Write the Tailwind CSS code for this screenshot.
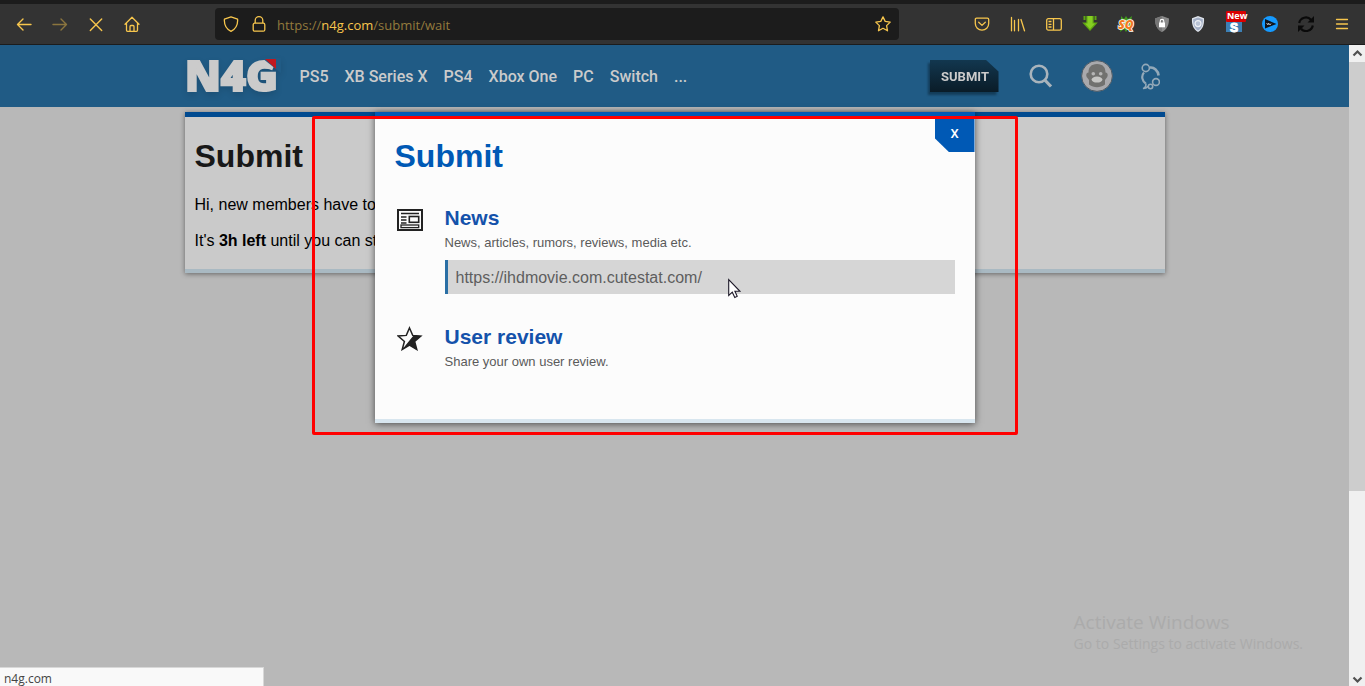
<!DOCTYPE html>
<html lang="en">
<head>
    <meta charset="UTF-8">
    <meta name="viewport" content="width=device-width, initial-scale=1.0">
    <title>N4G - Submit</title>
    <script src="https://cdn.jsdelivr.net/npm/@tailwindcss/browser@4"></script>
</head>
<body class="flex h-screen flex-col overflow-hidden bg-[#b8b8b8] font-['Liberation_Sans',sans-serif]">

    <!-- Browser toolbar -->
    <div class="flex h-[45px] shrink-0 items-center border-t-4 border-b border-[#1c1c1c] bg-[#333333] pr-[5px] pl-[6px] text-[#f7c64d]">
        <button class="flex w-9 justify-center" aria-label="Back">
            <svg class="size-4" viewBox="0 0 16 16" fill="none" stroke="currentColor" stroke-width="1.4" stroke-linecap="round" stroke-linejoin="round"><path d="M15 8.5H1.5M7 3L1.5 8.5L7 14"/></svg>
        </button>
        <button class="flex w-9 justify-center opacity-45" aria-label="Forward">
            <svg class="size-4" viewBox="0 0 16 16" fill="none" stroke="currentColor" stroke-width="1.4" stroke-linecap="round" stroke-linejoin="round"><path d="M1 8.5H14.5M9 3L14.5 8.5L9 14"/></svg>
        </button>
        <button class="flex w-9 justify-center" aria-label="Stop">
            <svg class="size-4" viewBox="0 0 16 16" fill="none" stroke="currentColor" stroke-width="1.4" stroke-linecap="round"><path d="M2.3 3L13.7 14.5M13.7 3L2.3 14.5"/></svg>
        </button>
        <button class="flex w-9 justify-center" aria-label="Home">
            <svg class="size-4" viewBox="0 0 16 16" fill="none" stroke="currentColor" stroke-width="1.3" stroke-linecap="round" stroke-linejoin="round"><path d="M1 8.3L8 1.3L15 8.3M2.5 7.2V14.3Q2.5 15.3 3.5 15.3H12.5Q13.5 15.3 13.5 14.3V7.2M6 15V10.5Q6 9.5 7 9.5H9Q10 9.5 10 10.5V15"/></svg>
        </button>

        <div class="mx-[65px] flex h-8 min-w-0 flex-1 items-center rounded-sm bg-[#1c1c1c] px-2">
            <svg class="size-4 shrink-0" viewBox="0 0 16 16" fill="none" stroke="currentColor" stroke-width="1.3" stroke-linejoin="round"><path d="M8 .8L14.6 3.2C15 9 12.5 13 8 15.3C3.5 13 1 9 1.4 3.2Z"/></svg>
            <svg class="ml-3 size-4 shrink-0" viewBox="0 0 16 16" fill="none" stroke="currentColor" stroke-width="1.3"><rect x="2.2" y="7.2" width="11.6" height="8" rx="1.5"/><path d="M4.2 7V4.5a3.8 3.8 0 0 1 7.6 0V7"/></svg>
            <div class="ml-[10px] flex-1 truncate pt-0.5 font-['Open_Sans',sans-serif] text-[13px] leading-5 text-[#937a3c]">https://<span class="text-[#f7c64d]">n4g.com</span>/submit/wait</div>
            <button aria-label="Bookmark this page">
                <svg class="size-4" viewBox="0 0 16 16" fill="none" stroke="currentColor" stroke-width="1.3" stroke-linejoin="round"><path d="M8 .9L10.2 5.4L15.2 6.1L11.6 9.6L12.5 14.8L8 12.3L3.5 14.8L4.4 9.6L.8 6.1L5.8 5.4Z"/></svg>
            </button>
        </div>

        <button class="flex w-9 justify-center" aria-label="Pocket">
            <svg class="size-4" viewBox="0 0 16 16" fill="none" stroke="currentColor" stroke-width="1.3" stroke-linecap="round" stroke-linejoin="round"><path d="M2.6 2.2H13.4Q14.7 2.2 14.7 3.5V7.5A6.7 6.7 0 0 1 1.3 7.5V3.5Q1.3 2.2 2.6 2.2ZM4.7 6.3L8 9.4L11.3 6.3"/></svg>
        </button>
        <button class="flex w-9 justify-center" aria-label="Library">
            <svg class="size-4" viewBox="0 0 16 16" fill="none" stroke="currentColor" stroke-width="1.3" stroke-linecap="round"><path d="M1.5 1.5V14.8M4.5 4.5V14.8M8.5 3.5V14.8M11 3.5L14.5 14.8"/></svg>
        </button>
        <button class="flex w-9 justify-center" aria-label="Sidebars">
            <svg class="size-4" viewBox="0 0 16 16" fill="none" stroke="currentColor" stroke-width="1.3"><rect x=".7" y="2.7" width="14.6" height="11.4" rx="1.6"/><path d="M7.5 3V14M2.5 5.5H5.5M2.5 8.3H5.5M2.5 11H5.5"/></svg>
        </button>
        <button class="flex w-9 justify-center" aria-label="Downloader">
            <svg class="size-4" viewBox="0 0 16 16"><path d="M1.5 0H3.5V4H1.5ZM12.5 0H14.5V4H12.5ZM4.3 0H11.7V6.5H15.8L8 15L.2 6.5H4.3Z" fill="#5fa613"/><path d="M5.5 0H10.5V7.5H13L8 13L3 7.5H5.5Z" fill="#86cf22"/></svg>
        </button>
        <button class="flex w-9 justify-center" aria-label="SQ">
            <svg class="size-4 overflow-visible" viewBox="0 0 16 16"><path d="M3 0L6 3L8 0L10 3L14 0L13 5V12L14 16L10 13L8 16L6 13L2 16L3 11V5Z" fill="#3f9a1c"/><text x="8" y="12.5" text-anchor="middle" font-family="Open Sans" font-size="12" font-weight="800" font-style="italic" fill="#f37a1f" stroke="#ffffff" stroke-width="1.6" paint-order="stroke">SQ</text></svg>
        </button>
        <button class="flex w-9 justify-center" aria-label="Privacy lock">
            <svg class="size-4" viewBox="0 0 16 16"><path d="M8 0L15 2.5C15 9 13 13.5 8 16C3 13.5 1 9 1 2.5Z" fill="#8b8b8b"/><path d="M8 0V16C3 13.5 1 9 1 2.5Z" fill="#767676"/><rect x="5" y="6.5" width="6" height="4.8" fill="#fff"/><path d="M6.2 7V5.2a1.8 1.8 0 0 1 3.6 0V7" fill="none" stroke="#fff" stroke-width="1.1"/></svg>
        </button>
        <button class="flex w-9 justify-center" aria-label="Security shield">
            <svg class="size-4" viewBox="0 0 16 16"><path d="M8 0L14 2.3C14.5 9 12.5 13.5 8 16C3.5 13.5 1.5 9 2 2.3Z" fill="#dfe4ec"/><path d="M8 1.4L12.8 3.2C13 8.8 11.5 12.5 8 14.6C4.5 12.5 3 8.8 3.2 3.2Z" fill="#a3afc6"/><circle cx="8" cy="7.6" r="3" fill="#b9c3d5" stroke="#eef1f6" stroke-width="1.2"/></svg>
        </button>
        <button class="flex w-9 justify-center" aria-label="S extension, new">
            <svg class="size-4 overflow-visible" viewBox="0 0 16 16"><rect width="16" height="16" fill="#3d80b5"/><text x="8" y="15.5" text-anchor="middle" font-family="Liberation Sans" font-size="12" font-weight="700" fill="#fff" stroke="#fff">S</text><rect x="0" y="-5" width="20" height="11" rx="1" fill="#d90000"/><text x="1" y="3" font-family="Open Sans" font-size="9" font-weight="700" fill="#fff">New</text></svg>
        </button>
        <button class="flex w-9 justify-center" aria-label="Video player">
            <svg class="size-4" viewBox="0 0 16 16"><circle cx="8" cy="8" r="8" fill="#159aff"/><path d="M3 3L14.5 8L3 12.5Z" fill="#10141c"/><path d="M4.5 7L6 9L6.5 7L8 9L9 7.5" fill="none" stroke="#cfd4da" stroke-width=".8"/></svg>
        </button>
        <button class="flex w-9 justify-center" aria-label="Refresh all">
            <svg class="size-4" viewBox="0 0 16 16" fill="none" stroke="#0a0a0a" stroke-width="2.2"><path d="M1.2 7A6.8 6.8 0 0 1 13 3.8M14.8 9.5A6.8 6.8 0 0 1 3 12.7"/><path d="M16 0V6.5H9.5ZM0 16V9.5H6.5Z" fill="#0a0a0a" stroke="none"/></svg>
        </button>
        <button class="flex w-9 justify-center" aria-label="Menu">
            <svg class="size-4" viewBox="0 0 16 16" fill="none" stroke="currentColor" stroke-width="1.3" stroke-linecap="round"><path d="M2.5 3.5H13.5M2.5 8H13.5M2.5 12.5H13.5"/></svg>
        </button>
    </div>

    <div class="flex min-h-0 flex-1">
        <div class="flex min-w-0 flex-1 flex-col">

            <!-- Site header -->
            <header class="h-[62px] shrink-0 bg-[#205b85]">
                <div class="mx-auto flex h-full max-w-[980px] items-center font-[Roboto,sans-serif] text-[#cbcbcb]">
                    <a href="#" class="ml-[2px]" aria-label="N4G home">
                        <svg class="h-9 w-[90px] overflow-visible drop-shadow-md" viewBox="0 0 90 36">
                            <text x="-2" y="33" font-family="Open Sans" font-size="43" font-weight="800" fill="#cbcbcb" stroke="#cbcbcb" stroke-width="2">N4G</text>
                            <path d="M75 0H94V15Z" fill="#205b85"/>
                            <path d="M78 1H89V11Z" fill="#c0181f"/>
                        </svg>
                    </a>
                    <nav class="ml-[23px] flex gap-4 pt-0.5 text-base font-medium">
                        <a href="#">PS5</a>
                        <a href="#">XB Series X</a>
                        <a href="#">PS4</a>
                        <a href="#">Xbox One</a>
                        <a href="#">PC</a>
                        <a href="#">Switch</a>
                        <a href="#">...</a>
                    </nav>
                    <div class="mr-[5px] ml-auto flex items-center">
                        <div class="drop-shadow-[-2px_3px_1px_rgba(10,40,60,0.6)]">
                            <button class="h-8 w-[69px] bg-linear-to-b from-[#12374f] to-[#0a1c28] pt-0.5 pl-0.5 text-[13px] font-bold [clip-path:polygon(0_0,82%_0,100%_36%,100%_100%,0_100%)]">SUBMIT</button>
                        </div>
                        <button class="ml-[30px]" aria-label="Search">
                            <svg class="size-6" viewBox="0 0 24 24" fill="none" stroke="#a9b4bc" stroke-width="2.6"><circle cx="10" cy="10" r="8.3"/><path d="M15.8 16L22 22.5" stroke-width="3.2"/></svg>
                        </button>
                        <button class="ml-[28px]" aria-label="Profile">
                            <svg class="size-8" viewBox="0 0 32 32"><circle cx="16" cy="16" r="15.4" fill="#a9a9ac" stroke="#4c5a66"/><path d="M16 4C22 4 24.5 7.5 24.5 12.5C27 12.5 27.5 16 25.5 18L24 20V24.5C19 28 13 28 8 24.5V20L6.5 18C4.5 16 5 12.5 7.5 12.5C7.5 7.5 10 4 16 4Z" fill="#71716f"/><circle cx="12.3" cy="13.7" r="1.8" fill="#b5b5b5"/><circle cx="19.7" cy="13.7" r="1.8" fill="#b5b5b5"/><ellipse cx="16" cy="19.6" rx="5.4" ry="3" fill="#c6c6c4"/></svg>
                        </button>
                        <button class="ml-[28px]" aria-label="Notifications">
                            <svg class="h-[27px] w-[19px]" viewBox="0 0 19 27" fill="none" stroke="#93a9b9" stroke-width="1.6"><circle cx="4.8" cy="5" r="3.6"/><path d="M9 4.6C13 4 17 7.5 17.6 12.5" stroke-width="2.6"/><path d="M3 9.5C0 13 1 18 4.8 20.5" stroke-width="2.2"/><path d="M4.8 20.5C5.5 23 4 25 2 25.5C5 25.5 6.5 24.5 7.2 23"/><circle cx="15" cy="19" r="3.4"/><circle cx="9.5" cy="23.5" r="2.2"/></svg>
                        </button>
                    </div>
                </div>
            </header>

            <main class="relative flex-1 px-4 pt-[5px]">
                <section class="mx-auto max-w-[980px] border-t-[5px] border-b-4 border-t-[#004a90] border-b-[#a9b9c2] bg-[#cacaca] px-[10px] pt-[19px] pb-4 shadow-[0_1px_5px_rgba(0,0,0,0.45)]">
                    <h1 class="text-[32px] leading-10 font-bold text-[#181818]">Submit</h1>
                    <p class="mt-[17px] text-base">Hi, new members have to wait</p>
                    <p class="mt-3 text-base">It's <b>3h left</b> until you can start</p>
                </section>

                <!-- Submit dialog -->
                <div class="absolute inset-x-0 top-[5px]">
                    <div role="dialog" aria-labelledby="dialogTitle" class="relative mx-auto max-w-[600px] border-t-[5px] border-b-4 border-t-[#0059b5] border-b-[#d8e6ef] bg-[#fcfcfc] px-5 pt-[19px] pb-[46px] shadow-[0_1px_7px_rgba(0,0,0,0.6)]">
                        <button class="absolute top-0 right-0 h-[35px] w-10 bg-[#0059b5] pb-0.5 font-[Roboto,sans-serif] text-[13px] font-medium text-white [clip-path:polygon(0_0,100%_0,100%_100%,36%_100%,0_60%)]" aria-label="Close">X</button>
                        <h2 id="dialogTitle" class="text-[32px] leading-10 font-bold text-[#0059b5]">Submit</h2>

                        <div class="mt-7 flex">
                            <svg class="mt-[5px] ml-[2px] h-[22px] w-[26px] shrink-0" viewBox="0 0 26 22" fill="none" stroke="#222" stroke-width="1.6"><rect x="1" y="1" width="24" height="20" stroke-width="2"/><path d="M4 4.5H22M4 8H9.5M4 11H9.5M4 14H9.5"/><rect x="12.3" y="7.5" width="9.4" height="5.8"/><rect x="4" y="16" width="17.7" height="2.6" stroke-width="1.3"/></svg>
                            <div class="ml-[22px] flex-1">
                                <h3 class="text-[21px] leading-7 font-bold"><a href="#" class="text-[#1452ab]">News</a></h3>
                                <label for="newsUrl" class="block text-[13px] leading-[22px] text-[#5a5a5a]">News, articles, rumors, reviews, media etc.</label>
                                <div class="relative mt-[6px]">
                                    <input id="newsUrl" type="text" value="https://ihdmovie.com.cutestat.com/" class="block h-[34px] w-full border-l-[3px] border-[#2a6fa5] bg-[#d6d6d6] px-2 pt-0.5 text-base text-[#5e5e5e] outline-none">
                                    <!-- Mouse pointer -->
                                    <svg class="absolute top-[18px] left-[283px] h-[21px] w-[13px]" viewBox="0 0 13 21"><path d="M.7 1.5V17.5L4.3 14.2L6.8 19.5L9.2 18.3L6.9 13.3H12Z" fill="#fff" stroke="#1c1828" stroke-width="1.1"/></svg>
                                </div>
                            </div>
                        </div>

                        <div class="mt-[29px] flex">
                            <svg class="mt-[3px] ml-[2px] h-[25px] w-[26px] shrink-0" viewBox="0 0 26 25"><path d="M12.5 2L15.7 9.4L23.8 10L17.6 15.4L19.8 23.5L12.5 19.2L5.2 23.5L7.4 15.4L1.2 10L9.3 9.4Z" fill="none" stroke="#222" stroke-width="1.5"/><path d="M16.5 9.5L24 10L17.6 15.4L20 24L12.5 19.2L5 23.8Z" fill="#222"/></svg>
                            <div class="ml-[22px] flex-1">
                                <h3 class="text-[21px] leading-7 font-bold"><a href="#" class="text-[#1452ab]">User review</a></h3>
                                <p class="text-[13px] leading-[22px] text-[#5a5a5a]">Share your own user review.</p>
                            </div>
                        </div>

                        <!-- Highlight frame -->
                        <div class="pointer-events-none absolute -top-px -right-[43px] -bottom-4 -left-[63px] rounded-xs border-[3px] border-[#ff0000]"></div>
                    </div>
                </div>

                <!-- Activation watermark -->
                <div class="absolute right-[46px] bottom-8 font-['Open_Sans',sans-serif] text-[#ababab]">
                    <div class="text-[19px] leading-6">Activate Windows</div>
                    <div class="text-sm leading-5">Go to Settings to activate Windows.</div>
                </div>

                <!-- Status bar -->
                <div class="absolute bottom-0 left-0 h-[19px] w-[264px] border-t border-r border-[#d8d8d8] bg-[#f9f9f9] pl-1 font-['Open_Sans',sans-serif] text-xs leading-[22px] text-[#444]">n4g.com</div>
            </main>
        </div>

        <!-- Scrollbar -->
        <div class="flex w-4 shrink-0 flex-col bg-[#f0f0f0]">
            <svg class="h-[17px] w-4" viewBox="0 0 16 17" fill="none" stroke="#505050" stroke-width="2.2"><path d="M4.5 10.5L8.5 6.5L12.5 10.5"/></svg>
            <div class="flex-1"><div class="h-[70.7%] bg-[#cdcdcd]"></div></div>
            <svg class="h-[17px] w-4" viewBox="0 0 16 17" fill="none" stroke="#505050" stroke-width="2.2"><path d="M4.5 8.5L8.5 12.5L12.5 8.5"/></svg>
        </div>
    </div>
</body>
</html>
